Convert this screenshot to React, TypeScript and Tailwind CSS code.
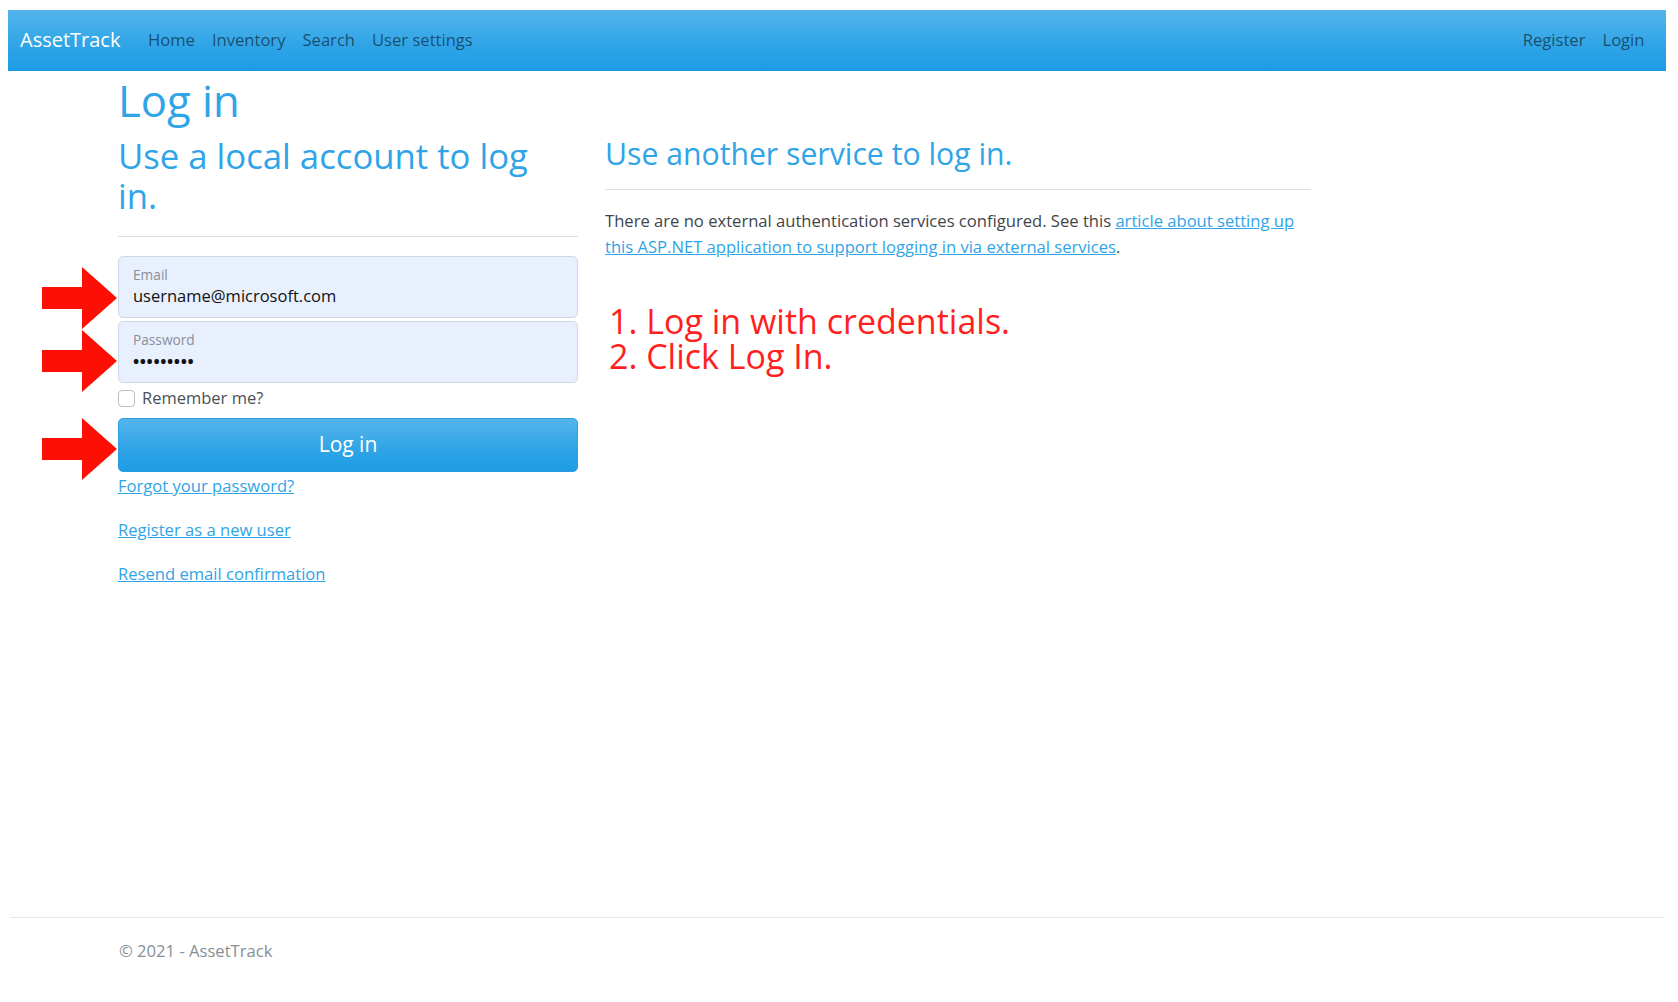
import React from "react";

function Arrow({ top }: { top: number }) {
  return (
    <svg
      className="absolute left-[42px]"
      style={{ top }}
      width="76"
      height="62"
      viewBox="0 0 76 62"
    >
      <polygon points="0,20 40,20 40,0 75,31 40,62 40,42 0,42" fill="#fd0f06" />
    </svg>
  );
}

export default function App() {
  return (
    <div className="relative w-full h-[1002px] bg-white flex flex-col overflow-hidden font-['Open_Sans',sans-serif]">
      {/* Navbar */}
      <nav className="mt-[10px] ml-[8px] mr-[12px] h-[61px] shrink-0 flex items-center pl-[12px] pr-[13px] bg-[linear-gradient(#54b4eb,#2fa4e7_60%,#1d9ce5)] border-b border-[#1b95dc]">
        <span className="text-[20px] text-white mr-[19px] leading-none">AssetTrack</span>
        <ul className="flex items-center text-[16.6px] text-[rgba(0,0,0,0.55)]">
          <li className="px-[8.5px]">Home</li>
          <li className="px-[8.5px]">Inventory</li>
          <li className="px-[8.5px]">Search</li>
          <li className="px-[8.5px]">User settings</li>
        </ul>
        <ul className="ml-auto flex items-center text-[16.6px] text-[rgba(0,0,0,0.55)]">
          <li className="px-[8.5px]">Register</li>
          <li className="px-[8.5px]">Login</li>
        </ul>
      </nav>

      {/* Main */}
      <main className="flex-1 pl-[118px]">
        <h1 className="mt-[3px] text-[43.6px] leading-[52px] text-[#2fa4e7]">Log in</h1>
        <div className="mt-[10px] flex gap-[27px]">
          {/* Left column */}
          <section className="w-[460px]">
            <h2 className="max-w-[430px] text-[34.7px] leading-[40px] text-[#2fa4e7]">
              Use a local account to log in.
            </h2>
            <hr className="mt-[20px] border-0 border-t border-[#dedede]" />
            <form className="mt-[19px] flex flex-col">
              <div className="h-[62px] rounded-[5px] border border-[#cfd9e6] bg-[#e8f0fe] pl-[14px] flex flex-col justify-center">
                <span className="text-[13.7px] leading-[16px] text-[#8a8f96]">Email</span>
                <span className="mt-[2px] text-[16.5px] leading-[22px] text-[#111]">
                  username@microsoft.com
                </span>
              </div>
              <div className="mt-[3px] h-[62px] rounded-[5px] border border-[#cfd9e6] bg-[#e8f0fe] pl-[14px] flex flex-col justify-center">
                <span className="text-[13.7px] leading-[16px] text-[#8a8f96]">Password</span>
                <span className="mt-[2px] text-[16.5px] leading-[22px] text-[#111] tracking-[0.6px] font-bold">
                  •••••••••
                </span>
              </div>
              <label className="mt-[3px] flex items-center h-[24px] text-[16.5px] text-[#495057]">
                <span className="w-[17px] h-[17px] rounded-[4px] border border-[#b9bfc6] bg-white mr-[7px]" />
                Remember me?
              </label>
              <button
                type="button"
                className="mt-[8px] h-[54px] w-full rounded-[5px] text-white text-[21px] bg-[linear-gradient(#54b4eb,#2fa4e7_60%,#1d9ce5)] border border-[#2a9ee0]"
              >
                Log in
              </button>
              <div className="mt-[1px] flex flex-col gap-[18px] text-[16.6px] leading-[26px]">
                <a className="text-[#2fa4e7] underline self-start">Forgot your password?</a>
                <a className="text-[#2fa4e7] underline self-start">Register as a new user</a>
                <a className="text-[#2fa4e7] underline self-start">Resend email confirmation</a>
              </div>
            </form>
          </section>

          {/* Right column */}
          <section className="w-[706px]">
            <h3 className="text-[30.2px] leading-[36px] text-[#2fa4e7]">
              Use another service to log in.
            </h3>
            <hr className="mt-[17px] border-0 border-t border-[#dedede]" />
            <p className="mt-[18px] text-[16.6px] leading-[26px] text-[#3f4549]">
              There are no external authentication services configured. See this{" "}
              <a className="text-[#2fa4e7] underline">
                article about setting up this ASP.NET application to support logging in via external services
              </a>
              .
            </p>
            <div className="mt-[44px] pl-[4px] text-[34px] leading-[35px] text-[#ff1f1f]">
              <div>1. Log in with credentials.</div>
              <div>2. Click Log In.</div>
            </div>
          </section>
        </div>
      </main>

      {/* Footer */}
      <footer className="shrink-0 ml-[10px] mr-[13px] mb-[18px] h-[67px] border-t border-[#e8e8e8] pl-[109px] text-[16.6px] leading-[66px] text-[#868e96]">
        © 2021 - AssetTrack
      </footer>

      {/* Annotation arrows */}
      <Arrow top={267} />
      <Arrow top={330} />
      <Arrow top={418} />
    </div>
  );
}
